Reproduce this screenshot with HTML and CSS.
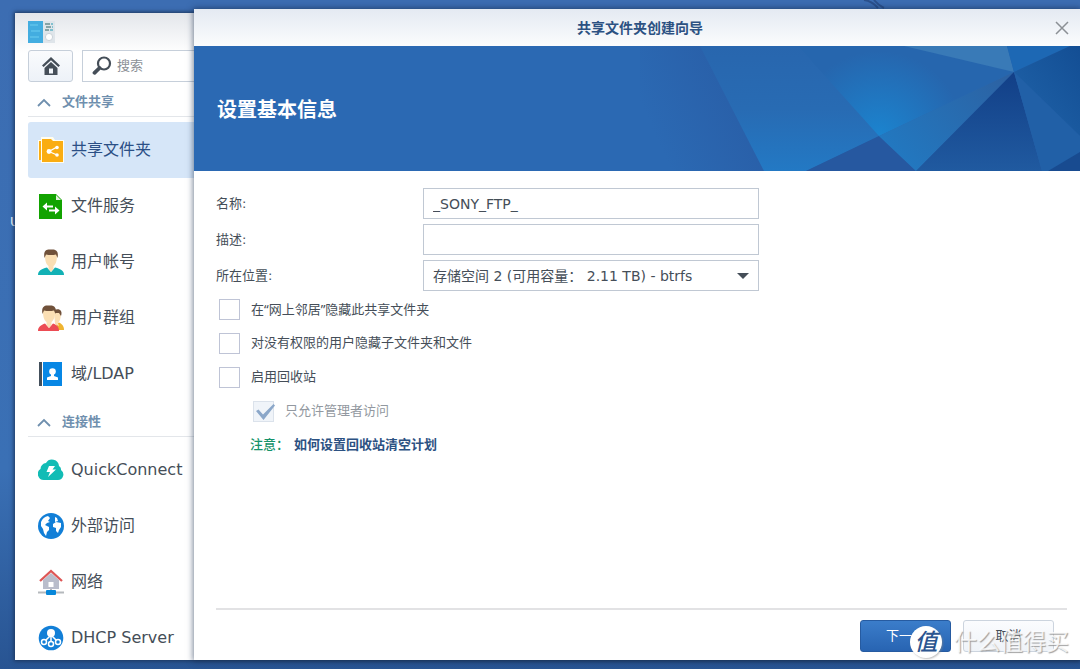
FILE: index.html
```html
<!DOCTYPE html>
<html lang="zh-CN">
<head>
<meta charset="utf-8">
<title>共享文件夹创建向导</title>
<link rel="stylesheet" href="styles.css">
</head>
<body>
<div class="desktop">
  <svg class="desktop-lines" width="60" height="12" viewBox="0 0 60 12" aria-hidden="true"><path d="M4 0Q12 1 18 8M14 0Q18 5 24 8" fill="none" stroke="#2b518c" stroke-width="2"/></svg>
  <span class="desktop-label">U</span>

  <section class="window panel">
    <svg class="app-icon" width="28" height="24" viewBox="0 0 28 24" aria-hidden="true">
      <path d="M0 1H15V23H0Z" fill="#43ade0"/><path d="M15 1H27V23H15Z" fill="#dfe5ea"/>
      <path d="M2 5H10M3 11H12M2 17H11" stroke="#5fc2ea" stroke-width="1.5"/>
      <path d="M17 4H22M18 7H23M17 10H21" stroke="#6b8f90" stroke-width="1.5"/>
      <path d="M23 4H25M24 7H25M22 10H25" stroke="#63b4c6" stroke-width="1.5"/>
      <circle cx="21" cy="17" r="3.6" fill="#fff" stroke="#ccd3d9"/>
    </svg>
    <div class="toolbar">
      <button class="home" type="button" aria-label="主页">
        <svg width="20" height="20" viewBox="0 0 20 20"><path d="M10 1 1 9.5 2.6 11 10 4.2 17.4 11 19 9.5Z" fill="#454e58"/><path d="M10 6 3.5 12V19H16.500V12ZM8 12.500H12V17.500H8Z" fill="#454e58" fill-rule="evenodd"/></svg>
      </button>
      <label class="search">
        <svg width="20" height="20" viewBox="0 0 20 20" aria-hidden="true"><circle cx="12" cy="7.500" r="6" fill="none" stroke="#454e58" stroke-width="2.200"/><path d="M7.500 12 2.500 16.800" stroke="#454e58" stroke-width="3.800" stroke-linecap="round"/></svg>
        <input type="text" placeholder="搜索" aria-label="搜索">
      </label>
    </div>
    <nav>
      <h2 class="group"><svg width="14" height="9" viewBox="0 0 14 9"><path d="M1 8 7 2 13 8" fill="none" stroke="#6f8fae" stroke-width="1.800"/></svg>文件共享</h2>
      <div class="items">
        <a class="item selected" href="#"><svg width="26" height="26" viewBox="0 0 26 26"><path d="M0 3H3V0H15L17 3H26V26H3V23H0Z" fill="#fffdf0"/><path d="M1 4H3V23H1ZM4 2H13L15 4H25V25H4Z" fill="#faad12"/><path d="M19 10 11 14.500 19 18" fill="none" stroke="#fff" stroke-width="1.300"/><circle cx="11" cy="14.500" r="2.400" fill="#fff"/><circle cx="19" cy="10.500" r="1.800" fill="#fff"/><circle cx="19" cy="18" r="1.800" fill="#fff"/></svg>共享文件夹</a>
        <a class="item" href="#"><svg width="26" height="26" viewBox="0 0 26 26"><path d="M1 1H18L24 7V26H1Z" fill="#12a300"/><path d="M18 2V7H23Z" fill="#e1f2dd"/><path d="M9 9.500 4.500 13.500 9 17.500V14.500H15V12.500H9ZM17 13.500 21.500 17.500 17 21.500V18.500H11V16.500H17Z" fill="#fff"/></svg>文件服务</a>
        <a class="item" href="#"><svg width="26" height="26" viewBox="0 0 26 26"><path d="M0 26C0 22 3 20 9 18.500L13 23 17 18.500C23 20 26 22 26 26Z" fill="#12b1b5"/><path d="M7 6C7 1 19 1 19 6 19 12 18 15 15.500 17V20L13 23 10.500 20V17C8 15 7 12 7 6Z" fill="#fbdfb4"/><path d="M6.500 9C5 1 9 0 13 .500 18 0 21 2 19.500 9L18 5.500C14 6.500 11 6 8 5.500Z" fill="#70513a"/></svg>用户帐号</a>
        <a class="item" href="#"><svg width="26" height="26" viewBox="0 0 26 26"><path d="M18 19 21 17.500C24 19 26 21 26 25H20Z" fill="#efb431"/><path d="M16 7H23C23 13 22 16 20 18L21 21 17 19Z" fill="#fbdfb4"/><path d="M16 5C21 3 25 5 23 11L21 8H16Z" fill="#70513a"/><path d="M0 26C0 22 3 20 7 18.500L11 23 15 18.500C19 20 21 22 21 26Z" fill="#ec4c54"/><path d="M5 6C5 1 17 1 17 6 17 12 16 15 13.500 17V20L11 23 8.500 20V17C6 15 5 12 5 6Z" fill="#fbdfb4"/><path d="M4.500 9C3 1 7 0 11 .500 16 0 19 2 17.500 9L16 5.500C12 6.500 9 6 6 5.500Z" fill="#70513a"/></svg>用户群组</a>
        <a class="item" href="#"><svg width="26" height="26" viewBox="0 0 26 26"><path d="M1 1H4V25H1Z" fill="#44505c"/><path d="M5 1H24V25H5Z" fill="#0787e5"/><circle cx="14.500" cy="10.500" r="3.300" fill="#fff"/><path d="M13 12H16V15L20 16.500V19H9V16.500L13 15Z" fill="#fff"/></svg>域/LDAP</a>
      </div>
      <h2 class="group"><svg width="14" height="9" viewBox="0 0 14 9"><path d="M1 8 7 2 13 8" fill="none" stroke="#6f8fae" stroke-width="1.800"/></svg>连接性</h2>
      <div class="items">
        <a class="item" href="#"><svg width="26" height="26" viewBox="0 0 26 26"><path d="M6 23A6 6 0 0 1 2.500 12 6 6 0 0 1 8 6 7 7 0 0 1 21 9 4 4 0 0 1 23 13 5.500 5.500 0 0 1 20 23Z" fill="#12bcb5"/><path d="M11 9H17L14.500 12.500H18L10 20 12 15H8.500Z" fill="#fff"/></svg>QuickConnect</a>
        <a class="item" href="#"><svg width="26" height="26" viewBox="0 0 26 26"><circle cx="13" cy="13" r="13" fill="#127fd7"/><path d="M3 9Q5 4 10 3L12 5 10 8 12 9 9 10 7 12 11 14 11 17 9 19 8 23 6 20 5 16 3 13ZM17 4 19 5 20 8 17 9ZM15 11 18 9 23 10 23 14 21 17 20 20 18 18 18 15 15 14Z" fill="#fff"/></svg>外部访问</a>
        <a class="item" href="#"><svg width="26" height="26" viewBox="0 0 26 26"><path d="M5 11 13 4 21 11V20H5Z" fill="#b9bdcb"/><path d="M2 12 13 2 24 12" fill="none" stroke="#de5655" stroke-width="2.300"/><path d="M10.500 13H15.500V18H10.500Z" fill="#fff"/><path d="M0 23.500H26M13 20V23" stroke="#b5b9bd" stroke-width="2"/><rect x="8" y="21" width="10" height="5" rx="1" fill="#0787da"/></svg>网络</a>
        <a class="item" href="#"><svg width="26" height="26" viewBox="0 0 26 26"><circle cx="13" cy="13" r="12.300" fill="#127fd7"/><path d="M13 8V18M12 11 6 17M14 11 20 17" stroke="#fff" stroke-width="1.500"/><circle cx="13" cy="8" r="4" fill="#fff"/><g fill="#127fd7" stroke="#fff" stroke-width="1.500"><circle cx="6" cy="17" r="2.500"/><circle cx="13" cy="19" r="2.500"/><circle cx="20" cy="17" r="2.500"/></g></svg>DHCP Server</a>
      </div>
    </nav>
  </section>

  <section class="window wizard" role="dialog" aria-labelledby="wizard-title">
    <header class="titlebar">
      <h1 id="wizard-title">共享文件夹创建向导</h1>
      <button class="close" type="button" aria-label="关闭"><svg width="14" height="14" viewBox="0 0 14 14"><path d="M1 1 13 13M13 1 1 13" stroke="#8b9095" stroke-width="1.500"/></svg></button>
    </header>
    <div class="banner">
      <svg class="facets" viewBox="0 0 440 125" preserveAspectRatio="xMaxYMid slice" aria-hidden="true">
        <defs>
          <linearGradient id="shade" gradientUnits="userSpaceOnUse" x1="20" y1="100" x2="110" y2="60"><stop offset="0" stop-color="#2b69b3"/><stop offset="1" stop-color="#295fa8"/></linearGradient>
          <linearGradient id="left" x1="0" y1="0" x2="0" y2="1"><stop offset="0" stop-color="#2866ae"/><stop offset=".5" stop-color="#286bb3"/><stop offset="1" stop-color="#2379c4"/></linearGradient>
          <radialGradient id="glow" gradientUnits="userSpaceOnUse" cx="239" cy="90" r="85"><stop offset="0" stop-color="#1b84cf"/><stop offset="1" stop-color="#2666ae"/></radialGradient>
          <linearGradient id="mid" gradientUnits="userSpaceOnUse" x1="360" y1="25" x2="260" y2="115"><stop offset="0" stop-color="#2c62a3"/><stop offset="1" stop-color="#2278c0"/></linearGradient>
          <linearGradient id="deep" x1="0" y1="0" x2="0" y2="1"><stop offset="0" stop-color="#123f87"/><stop offset="1" stop-color="#205aa0"/></linearGradient>
          <linearGradient id="right" x1="1" y1="0" x2="0" y2="1"><stop offset="0" stop-color="#134e94"/><stop offset="1" stop-color="#2064aa"/></linearGradient>
        </defs>
        <path d="M0 0H440V125H0Z" fill="#2862ab"/>
        <path d="M0 0H60L124 125H0Z" fill="url(#shade)"/>
        <path d="M60 0H264L374 26 166 125H124Z" fill="url(#left)"/>
        <path d="M158 0H264L374 26 239 90Z" fill="url(#glow)"/>
        <path d="M264 0H367L374 26Z" fill="#397ab7"/>
        <path d="M367 0H430L374 26Z" fill="#1d68b4"/>
        <path d="M239 90 276 125H166Z" fill="#2658a0"/>
        <path d="M374 26 239 90 276 125Z" fill="url(#mid)"/>
        <path d="M374 26 276 125H402Z" fill="url(#deep)"/>
        <path d="M374 26 402 125H440V90Z" fill="#2160a7"/>
        <path d="M374 26 430 0H440V90Z" fill="url(#right)"/>
        <path d="M408 125 440 106V125Z" fill="#184b90"/>
      </svg>
      <h2>设置基本信息</h2>
    </div>
    <form class="form">
      <div class="fields">
        <label for="name">名称:</label><input id="name" type="text" value="_SONY_FTP_">
        <label for="desc">描述:</label><input id="desc" type="text">
        <label for="place">所在位置:</label>
        <div class="select"><select id="place"><option>存储空间 2 (可用容量： 2.11 TB) - btrfs</option></select><svg width="12" height="6" viewBox="0 0 12 6" aria-hidden="true"><path d="M0 0H12L6 6Z" fill="#454e58"/></svg></div>
      </div>
      <label class="check"><input type="checkbox"><span class="quoted">在“网上邻居”隐藏此共享文件夹</span></label>
      <label class="check"><input type="checkbox">对没有权限的用户隐藏子文件夹和文件</label>
      <label class="check"><input type="checkbox">启用回收站</label>
      <label class="check nested"><span class="tickbox"><input type="checkbox" checked disabled><svg width="22" height="18" viewBox="0 0 22 18" aria-hidden="true"><path d="M2 8 4.500 6.500 9 11.500 19.500 1 21 2.500 9.500 17Z" fill="#8ba7c9"/></svg></span>只允许管理者访问</label>
      <p class="note"><span>注意：</span><a href="#">如何设置回收站清空计划</a></p>
    </form>
    <footer class="footer">
      <button class="btn primary" type="button">下一步</button>
      <button class="btn" type="button">取消</button>
    </footer>
  </section>

  <div class="watermark"><span class="seal">值</span><span>什么值得买</span></div>
</div>
</body>
</html>
```
FILE: styles.css
```css
* { box-sizing: border-box; }
body {
  margin: 0;
  font: 13px/20px "DejaVu Sans", "Noto Sans CJK SC", sans-serif;
  color: #454e58;
}
h1, h2, p { margin: 0; }
a { color: inherit; text-decoration: none; }
svg { display: block; flex: none; }
button, input, select { font: inherit; color: inherit; }
.desktop {
  position: relative;
  height: 100vh;
  overflow: hidden;
  background: linear-gradient(#3c6db2, #3a70b5 70%, #285492);
}
.desktop-lines { position: absolute; left: 860px; top: 0; }
.desktop-label { position: absolute; left: 10px; top: 212px; color: #fff; }
.window { position: absolute; bottom: 9px; right: 0; background: #fff; }
.panel {
  left: 15px;
  top: 13px;
  padding: 7px 0 0 13px;
  overflow: hidden;
  background: linear-gradient(#e3e6eb, #fff 40px);
  box-shadow: 0 0 4px 1px #1c3459;
}
.toolbar { display: flex; gap: 9px; margin-top: 6px; }
.home {
  width: 45px;
  height: 32px;
  display: grid;
  place-items: center;
  padding: 0;
  border: 1px solid #c6cfda;
  border-radius: 3px;
  background: linear-gradient(#fafbfd, #edf2f8);
}
.search {
  width: 200px;
  display: flex;
  align-items: center;
  gap: 5px;
  padding-left: 9px;
  border: 1px solid #c6cfda;
  background: #fff;
}
.search input { width: 100px; padding: 0; border: 0; outline: 0; background: none; }
.search input::placeholder { color: #8b9096; opacity: 1; }
.group {
  height: 35px;
  display: flex;
  align-items: center;
  gap: 11px;
  padding: 6px 0 0 9px;
  border-bottom: 1px solid #e3e6ea;
  font-size: 13px;
  font-weight: 700;
  color: #6f8fae;
}
.items { padding-top: 5px; }
.item {
  height: 56px;
  display: flex;
  align-items: center;
  gap: 7px;
  padding-left: 10px;
  border-radius: 3px;
  font-size: 16px;
}
.item.selected { background: #d6e6f8; color: #2b4f85; }
.wizard {
  left: 194px;
  top: 9px;
  display: flex;
  flex-direction: column;
  box-shadow: 0 0 6px 1px #16294a90;
}
.titlebar {
  height: 37px;
  display: flex;
  align-items: center;
  padding: 0 10px 0 32px;
  background: linear-gradient(#e4eaf2, #fbfcfd);
}
.titlebar h1 {
  flex: 1;
  text-align: center;
  font-size: 14px;
  font-weight: 700;
  color: #2c5182;
}
.close { padding: 1px; border: 0; background: none; }
.banner {
  position: relative;
  height: 125px;
  display: flex;
  align-items: center;
  padding: 2px 0 0 23px;
  background: #2b69b3;
}
.facets { position: absolute; right: 0; top: 0; width: 440px; height: 100%; }
.banner h2 { font-size: 20px; font-weight: 700; line-height: 28px; color: #fff; }
.form { flex: 1; padding: 17px 22px 0; }
.fields {
  display: grid;
  grid-template-columns: 207px minmax(100px, 336px);
  grid-auto-rows: 31px;
  gap: 5px 0;
  align-items: center;
  margin-bottom: 1px;
}
.fields input, .fields select {
  width: 100%;
  height: 31px;
  padding: 0 9px;
  border: 1px solid #c0c8d3;
  border-radius: 0;
  background: #fff;
  font-size: 14px;
  outline: 0;
}
.select { position: relative; }
.select select { appearance: none; }
.select svg { position: absolute; right: 10px; top: 13px; pointer-events: none; }
.check {
  height: 34px;
  display: flex;
  align-items: center;
  gap: 11px;
  padding-left: 3px;
}
.quoted { font-family: "Noto Sans", "Noto Sans CJK SC", sans-serif; }
.check input {
  appearance: none;
  width: 21px;
  height: 21px;
  margin: 0;
  border: 1px solid #bfc4d6;
  background: #fff;
}
.nested { padding-left: 37px; color: #9298a0; }
.tickbox { position: relative; display: flex; }
.check .tickbox input { border-color: #dbe2eb; background: #f0f4f9; }
.tickbox svg { position: absolute; left: 1px; top: 2px; }
.note {
  height: 34px;
  display: flex;
  align-items: center;
  gap: 5px;
  padding-left: 34px;
}
.note span { color: #16936a; font-weight: 500; }
.note a { color: #2c5182; font-weight: 700; }
.footer {
  display: flex;
  justify-content: flex-end;
  gap: 12px;
  margin: 0 13px 0 22px;
  padding: 10px 13px 8px 0;
  border-top: 2px solid #e2e2e4;
}
.btn {
  width: 91px;
  height: 32px;
  padding: 0;
  border: 1px solid #ccd4de;
  border-radius: 3px;
  background: linear-gradient(#fbfcfe, #eff3f8);
}
.btn.primary {
  border-color: #265ba1;
  background: linear-gradient(#3b7dca, #2864b2);
  color: #fff;
}
.watermark {
  position: absolute;
  right: 11px;
  bottom: 11px;
  display: flex;
  align-items: center;
  gap: 12px;
  font-size: 23px;
  line-height: 32px;
  color: #fffc;
  text-shadow: 1px 1px 1px #888c;
  pointer-events: none;
}
.seal {
  width: 32px;
  height: 32px;
  border-radius: 50%;
  background: #fff;
  box-shadow: 1px 1px 2px #8888;
  color: #2b5590;
  font-style: italic;
  font-weight: 500;
  text-align: center;
  text-shadow: none;
}
```
